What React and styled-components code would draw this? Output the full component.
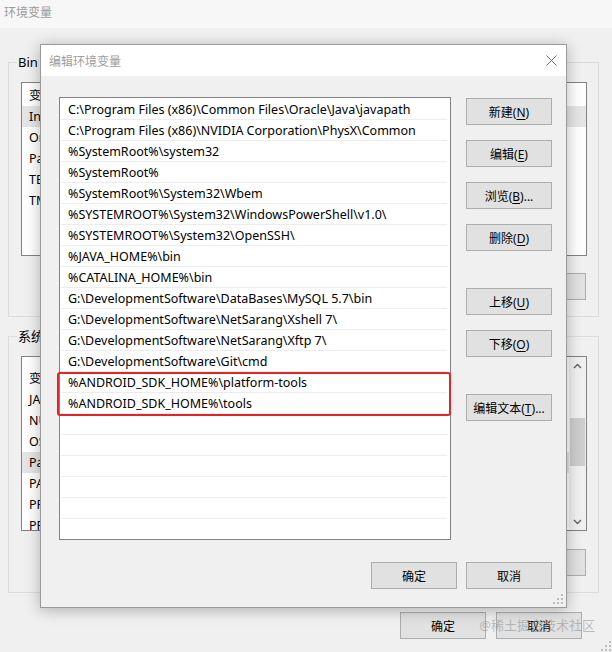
import React from 'react'
import styled, { createGlobalStyle } from 'styled-components'

const GlobalStyle = createGlobalStyle`
  html, body {
    margin: 0;
    padding: 0;
    background: #f0f0f0;
  }
  body {
    font-family: "Noto Sans", "Noto Sans CJK SC", sans-serif;
    font-size: 12px;
    color: #000;
  }
  #root {
    width: 612px;
    height: 652px;
    overflow: hidden;
  }
`;

const userVars = ['IntelliJ IDEA', 'OneDrive', 'Path', 'TEMP', 'TMP'];
const systemVars = ['JAVA_HOME', 'NUMBER_OF_PROCESSORS', 'OS', 'Path', 'PATHEXT', 'PROCESSOR_ARCHITECTURE', 'PROCESSOR_IDENTIFIER'];

const paths = [
    'C:\\Program Files (x86)\\Common Files\\Oracle\\Java\\javapath',
    'C:\\Program Files (x86)\\NVIDIA Corporation\\PhysX\\Common',
    '%SystemRoot%\\system32',
    '%SystemRoot%',
    '%SystemRoot%\\System32\\Wbem',
    '%SYSTEMROOT%\\System32\\WindowsPowerShell\\v1.0\\',
    '%SYSTEMROOT%\\System32\\OpenSSH\\',
    '%JAVA_HOME%\\bin',
    '%CATALINA_HOME%\\bin',
    'G:\\DevelopmentSoftware\\DataBases\\MySQL 5.7\\bin',
    'G:\\DevelopmentSoftware\\NetSarang\\Xshell 7\\',
    'G:\\DevelopmentSoftware\\NetSarang\\Xftp 7\\',
    'G:\\DevelopmentSoftware\\Git\\cmd',
    '%ANDROID_SDK_HOME%\\platform-tools',
    '%ANDROID_SDK_HOME%\\tools',
];

const TOTAL_ROWS = 21;

function Grip() {
    const dots = [[8, 0], [8, 4], [4, 4], [8, 8], [4, 8], [0, 8]];
    return (
        <svg width="10" height="10" viewBox="0 0 10 10">
            {dots.map(([x, y], i) => (
                <rect key={i} x={x} y={y} width="2" height="2" fill="#bdbdbd" />
            ))}
        </svg>
    );
}

function Chevron({ down }) {
    return (
        <svg width="9" height="6" viewBox="0 0 9 6">
            <path d={down ? 'M1 1 L4.5 4.5 L8 1' : 'M1 5 L4.5 1.5 L8 5'} fill="none" stroke="#606060" strokeWidth="1.4" />
        </svg>
    );
}

function Label({ text, mnemonic, suffix = '' }) {
    return (
        <>
            {text}(<u>{mnemonic}</u>){suffix}
        </>
    );
}

function App() {
    const rows = Array.from({ length: TOTAL_ROWS }, (_, i) => paths[i] || '');

    return (
        <Window>
            <GlobalStyle />
            <TitleBar>环境变量</TitleBar>
            <Content>
                <GroupBox>
                    <Legend>Bin 的用户变量(U)</Legend>
                    <VarList $height={174}>
                        <VarColumn $top={2}>
                            <VarRow>变量</VarRow>
                            {userVars.map((v, i) => (
                                <VarRow key={v} $selected={i === 0}>{v}</VarRow>
                            ))}
                        </VarColumn>
                    </VarList>
                    <GroupButtons>
                        <Button $w={86}>新建(N)...</Button>
                        <Button $w={86}>编辑(E)...</Button>
                        <Button $w={86}>删除(D)</Button>
                    </GroupButtons>
                </GroupBox>

                <GroupBox $gap={19}>
                    <Legend>系统变量(S)</Legend>
                    <VarList $height={175}>
                        <VarColumn $top={11}>
                            <VarRow>变量</VarRow>
                            {systemVars.map((v, i) => (
                                <VarRow key={i} $selected={i === 3}>{v}</VarRow>
                            ))}
                        </VarColumn>
                        <ScrollBar>
                            <ScrollArrow><Chevron /></ScrollArrow>
                            <ScrollTrack>
                                <ScrollThumb />
                            </ScrollTrack>
                            <ScrollArrow><Chevron down /></ScrollArrow>
                        </ScrollBar>
                    </VarList>
                    <GroupButtons $top={18}>
                        <Button $w={86}>新建(W)...</Button>
                        <Button $w={86}>编辑(I)...</Button>
                        <Button $w={86}>删除(L)</Button>
                    </GroupButtons>
                </GroupBox>

                <WindowFooter>
                    <Button $w={86}>确定</Button>
                    <Button $w={86}>取消</Button>
                </WindowFooter>
            </Content>
            <WindowGrip><Grip /></WindowGrip>

            <Dialog>
                <DialogTitle>
                    <span>编辑环境变量</span>
                    <svg width="11" height="11" viewBox="0 0 11 11">
                        <path d="M0.5 0.5 L10.5 10.5 M10.5 0.5 L0.5 10.5" stroke="#6f6f6f" strokeWidth="1" fill="none" />
                    </svg>
                </DialogTitle>
                <DialogBody>
                    <MainRow>
                        <PathListWrap>
                            <PathList>
                                {rows.map((p, i) => (
                                    <PathRow key={i}>{p}</PathRow>
                                ))}
                            </PathList>
                            <Highlight />
                        </PathListWrap>
                        <ButtonColumn>
                            <Button><Label text="新建" mnemonic="N" /></Button>
                            <Button><Label text="编辑" mnemonic="E" /></Button>
                            <Button><Label text="浏览" mnemonic="B" suffix="..." /></Button>
                            <Button><Label text="删除" mnemonic="D" /></Button>
                            <Button $spaced><Label text="上移" mnemonic="U" /></Button>
                            <Button><Label text="下移" mnemonic="O" /></Button>
                            <Button $spaced><Label text="编辑文本" mnemonic="T" suffix="..." /></Button>
                        </ButtonColumn>
                    </MainRow>
                    <DialogFooter>
                        <Button>确定</Button>
                        <Button>取消</Button>
                    </DialogFooter>
                </DialogBody>
                <DialogGrip><Grip /></DialogGrip>
            </Dialog>

            <Watermark>@稀土掘金技术社区</Watermark>
        </Window>
    )
}

const Window = styled.div`
    position: relative;
    width: 612px;
    height: 652px;
    background: #f0f0f0;
    display: flex;
    flex-direction: column;
`;
const TitleBar = styled.div`
    height: 28px;
    line-height: 26px;
    padding-left: 4px;
    background: #f7f7f7;
    color: #9b9b9b;
    font-size: 12px;
`;
const Content = styled.div`
    padding: 34px 13px 0 8px;
    display: flex;
    flex-direction: column;
`;
const GroupBox = styled.div`
    position: relative;
    margin-top: ${p => p.$gap || 0}px;
    border: 1px solid #dcdcdc;
    padding: 19px 11px 16px 12px;
`;
const Legend = styled.span`
    position: absolute;
    top: -9px;
    left: 8px;
    padding: 0 1px;
    background: #f0f0f0;
    font-size: 13px;
    line-height: 17px;
`;
const VarList = styled.div`
    height: ${p => p.$height}px;
    box-sizing: border-box;
    border: 1px solid #828282;
    background: #fff;
    display: flex;
    overflow: hidden;
`;
const VarColumn = styled.div`
    flex: 1;
    padding-top: ${p => p.$top}px;
`;
const VarRow = styled.div`
    height: 21px;
    line-height: 21px;
    padding-left: 7px;
    font-size: 12.5px;
    background: ${p => (p.$selected ? '#e5e5e5' : 'transparent')};
`;
const ScrollBar = styled.div`
    width: 17px;
    display: flex;
    flex-direction: column;
    background: #f0f0f0;
`;
const ScrollArrow = styled.div`
    height: 17px;
    display: flex;
    align-items: center;
    justify-content: center;
`;
const ScrollTrack = styled.div`
    flex: 1;
    display: flex;
    justify-content: center;
`;
const ScrollThumb = styled.div`
    width: 15px;
    height: 48px;
    margin-top: 44px;
    background: #cdcdcd;
`;
const GroupButtons = styled.div`
    display: flex;
    justify-content: flex-end;
    gap: 9px;
    margin-top: ${p => p.$top || 17}px;
    padding-right: 1px;
`;
const WindowFooter = styled.div`
    display: flex;
    justify-content: flex-end;
    gap: 10px;
    margin-top: 19px;
    padding-right: 17px;
`;
const Button = styled.button`
    width: ${p => p.$w || 86}px;
    height: 27px;
    margin-top: ${p => (p.$spaced ? 22 : 0)}px;
    box-sizing: border-box;
    padding: 0;
    background: #e1e1e1;
    border: 1px solid #adadad;
    border-radius: 0;
    font-family: "Noto Sans", "Noto Sans CJK SC", sans-serif;
    font-size: 12px;
    color: #000;
    u {
        text-underline-offset: 2px;
    }
`;
const WindowGrip = styled.div`
    position: absolute;
    right: 1px;
    bottom: 1px;
    display: flex;
`;
const Dialog = styled.div`
    position: absolute;
    left: 40px;
    top: 44px;
    width: 527px;
    height: 564px;
    box-sizing: border-box;
    border: 1px solid #9a9a9a;
    background: #f0f0f0;
    box-shadow: 0 2px 14px rgba(0, 0, 0, 0.28);
    display: flex;
    flex-direction: column;
`;
const DialogTitle = styled.div`
    height: 31px;
    background: #fff;
    display: flex;
    align-items: center;
    justify-content: space-between;
    padding: 0 9px 0 8px;
    color: #9d9d9d;
    font-size: 12px;
`;
const DialogBody = styled.div`
    flex: 1;
    padding: 21px 14px 18px 18px;
    display: flex;
    flex-direction: column;
`;
const MainRow = styled.div`
    display: flex;
    gap: 15px;
`;
const PathListWrap = styled.div`
    position: relative;
    width: 392px;
    height: 443px;
`;
const PathList = styled.div`
    height: 100%;
    box-sizing: border-box;
    border: 1px solid #828282;
    background: #fff;
    padding: 1px 3px 0 1px;
    overflow: hidden;
`;
const PathRow = styled.div`
    height: 21px;
    box-sizing: border-box;
    border-bottom: 1px solid #ececec;
    padding-left: 7px;
    line-height: 21px;
    font-size: 12.5px;
    white-space: nowrap;
`;
const Highlight = styled.div`
    position: absolute;
    top: 275px;
    left: -2px;
    width: 394px;
    height: 44px;
    box-sizing: border-box;
    border: 2px solid #e1262a;
    border-radius: 3px;
    pointer-events: none;
`;
const ButtonColumn = styled.div`
    display: flex;
    flex-direction: column;
    gap: 15px;
    width: 86px;
    padding-top: 1px;
`;
const DialogFooter = styled.div`
    display: flex;
    justify-content: flex-end;
    gap: 9px;
    margin-top: 22px;
`;
const DialogGrip = styled.div`
    position: absolute;
    right: 3px;
    bottom: 3px;
    display: flex;
`;
const Watermark = styled.div`
    position: absolute;
    right: 17px;
    top: 616px;
    font-size: 13px;
    line-height: 18px;
    color: rgba(140, 140, 140, 0.55);
    pointer-events: none;
`;

export default App
